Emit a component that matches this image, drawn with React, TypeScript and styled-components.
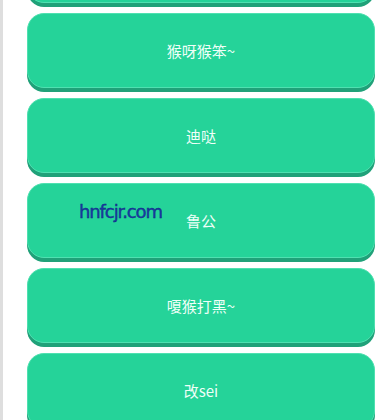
import React from 'react';
import styled, { createGlobalStyle } from 'styled-components';

const GlobalStyle = createGlobalStyle`
  html, body {
    margin: 0;
    padding: 0;
    background: #ffffff;
    overflow: hidden;
  }
`;

const Page = styled.div`
  position: relative;
  width: 392px;
  height: 420px;
  overflow: hidden;
  border-left: 3px solid #dedede;
  box-sizing: border-box;
  background: #ffffff;
`;

const List = styled.div`
  display: flex;
  flex-direction: column;
  gap: 10px;
  margin-top: -72px;
  padding-left: 24px;
  width: 348px;
`;

const ItemButton = styled.button`
  height: 75px;
  width: 348px;
  border: 1px solid #4fe0b0;
  border-radius: 17px;
  background: #25d399;
  box-shadow: 0 4px 0 #20a179;
  color: #effff8;
  font-family: "Noto Sans CJK SC", "Noto Sans", sans-serif;
  font-size: 15px;
  padding: 0;
  display: flex;
  align-items: center;
  justify-content: center;
  flex-shrink: 0;
`;

const Watermark = styled.span`
  position: absolute;
  left: 76px;
  top: 201px;
  font-family: "DejaVu Sans", "Liberation Sans", sans-serif;
  font-size: 18px;
  letter-spacing: -1.1px;
  color: #1a3aa6;
  -webkit-text-stroke: 0.4px #0e2a80;
`;

const items = ['', '猴呀猴笨~', '迪哒', '鲁公', '嗄猴打黑~', '改sei'];

export default function App() {
  return (
    <Page>
      <GlobalStyle />
      <List>
        {items.map((label, i) => (
          <ItemButton key={i}>{label}</ItemButton>
        ))}
      </List>
      <Watermark>hnfcjr.com</Watermark>
    </Page>
  );
}
